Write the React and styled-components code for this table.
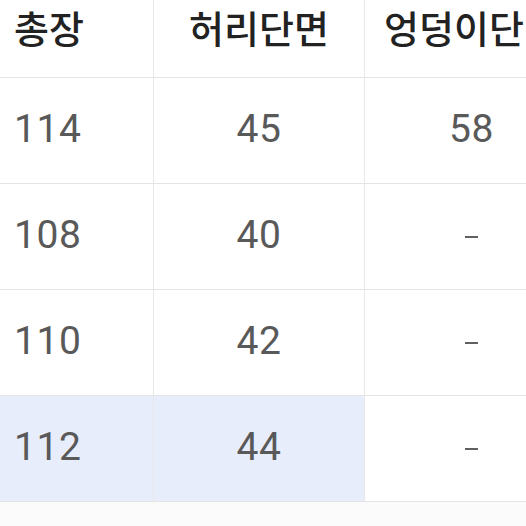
import React from "react";
import styled, { createGlobalStyle } from "styled-components";

const GlobalStyle = createGlobalStyle`
  html, body {
    margin: 0;
    padding: 0;
    background: #fff;
    overflow: hidden;
  }
  body {
    font-family: Roboto, "Noto Sans CJK KR", sans-serif;
  }
`;

const Page = styled.div`
  width: 526px;
  height: 526px;
  overflow: hidden;
  background: #fbfbfb;
`;

const Table = styled.div`
  width: 578px;
  display: grid;
  grid-template-columns: 154px 211px 213px;
  grid-template-rows: 78px repeat(4, 106px);
  background: #fff;
`;

const Cell = styled.div`
  box-sizing: border-box;
  display: flex;
  align-items: ${(p) => (p.$head ? "flex-start" : "center")};
  justify-content: ${(p) => (p.$left ? "flex-start" : "center")};
  padding-left: ${(p) => (p.$left ? "14px" : "0")};
  padding-top: ${(p) => (p.$head ? "6px" : "0")};
  border-bottom: 1px solid #e4e4e4;
  border-right: ${(p) => (p.$last ? "none" : "1px solid #e8e8e8")};
  background: ${(p) => (p.$hl ? "#e8edfb" : "#fff")};
`;

const HeadText = styled.span`
  font-family: "Noto Sans CJK KR", sans-serif;
  font-size: 38px;
  line-height: 1.1;
  font-weight: 500;
  color: #222;
  white-space: nowrap;
`;

const ValueText = styled.span`
  font-family: Roboto, sans-serif;
  font-size: 39px;
  letter-spacing: 0.6px;
  color: #595959;
  white-space: nowrap;
  margin-top: -4px;
`;

const Dash = styled.span`
  display: block;
  width: 13px;
  height: 2px;
  background: #606060;
`;

const headers = ["총장", "허리단면", "엉덩이단면"];
const rows = [
  ["114", "45", "58"],
  ["108", "40", "-"],
  ["110", "42", "-"],
  ["112", "44", "-"],
];

export default function App() {
  return (
    <Page>
      <GlobalStyle />
      <Table>
        {headers.map((h, i) => (
          <Cell key={h} $head $left={i === 0} $last={i === 2}>
            <HeadText>{h}</HeadText>
          </Cell>
        ))}
        {rows.map((r, ri) =>
          r.map((v, ci) => (
            <Cell
              key={ri + "-" + ci}
              $left={ci === 0}
              $last={ci === 2}
              $hl={ri === rows.length - 1 && ci < 2}
            >
              {v === "-" ? <Dash /> : <ValueText>{v}</ValueText>}
            </Cell>
          ))
        )}
      </Table>
    </Page>
  );
}
